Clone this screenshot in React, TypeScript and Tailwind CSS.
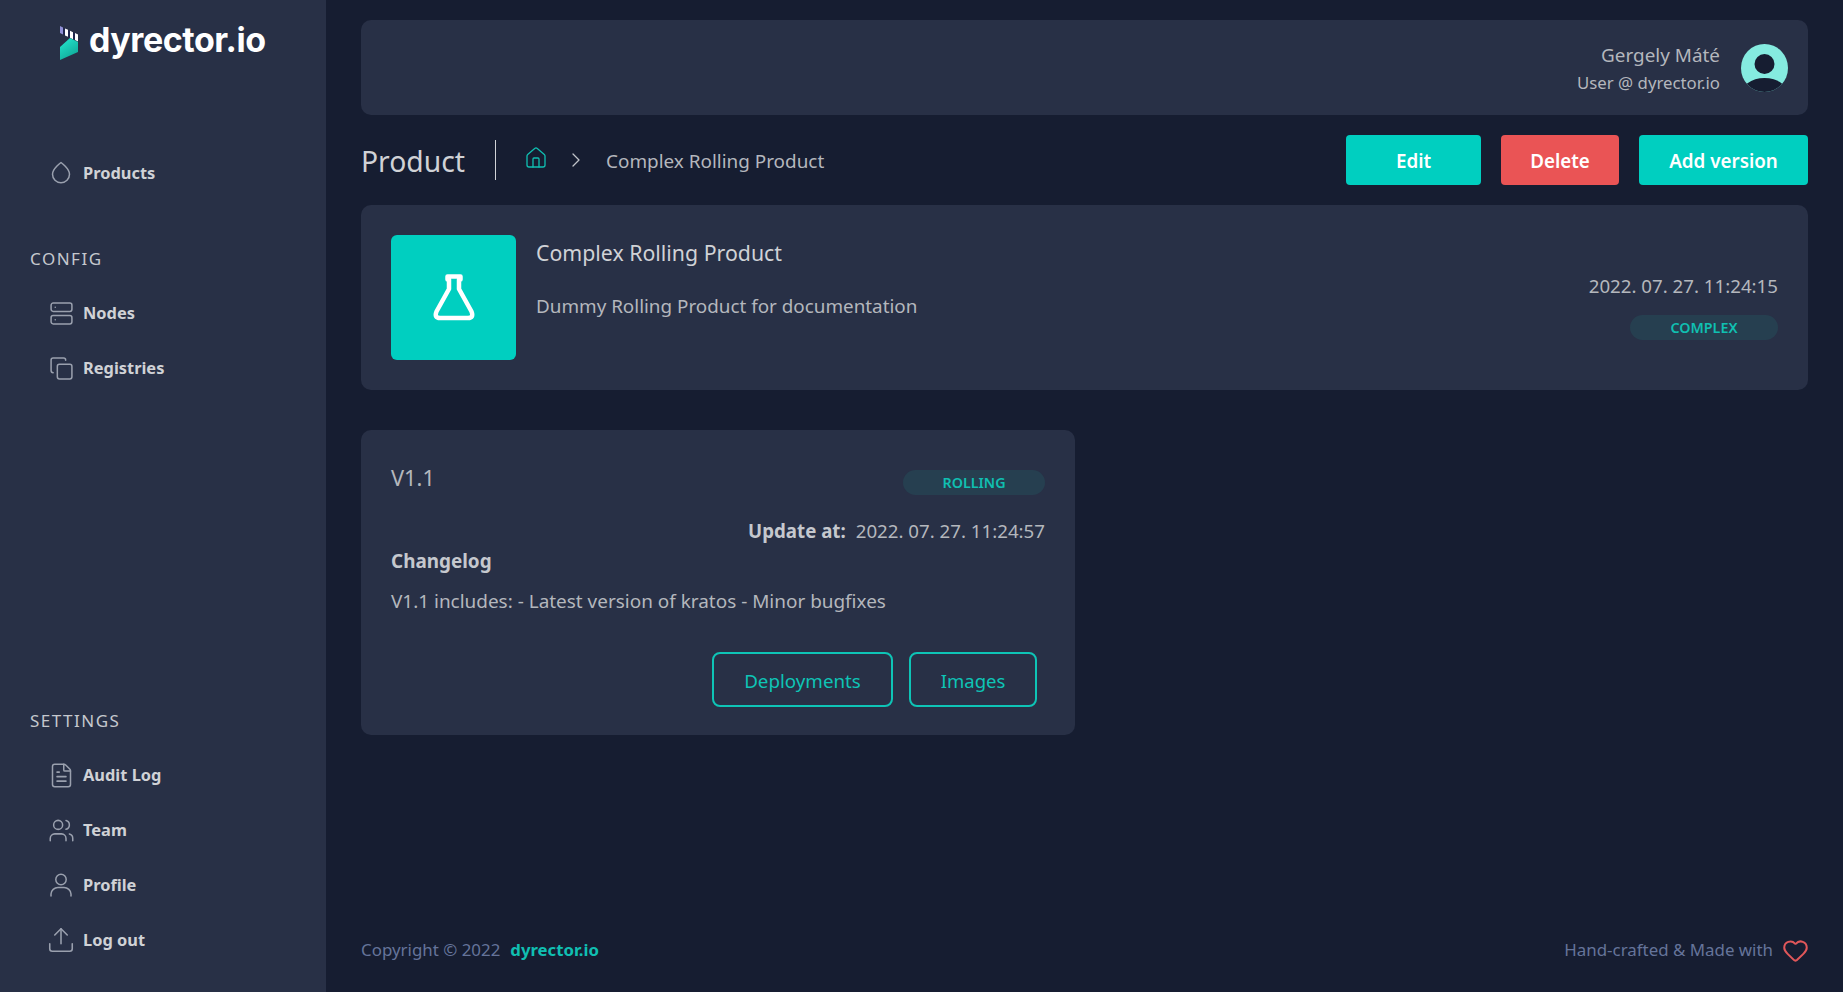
import { Server, Copy, FileText, Users, Upload, Home, ChevronRight, Heart } from "lucide-react";
import type { ReactNode } from "react";

function NavItem({ icon, label }: { icon: ReactNode; label: string }) {
  return (
    <div className="flex h-[55px] items-center gap-[10px] pl-[49px] text-[#9aa0ae]">
      <span className="flex h-[24px] w-[24px] items-center justify-center">{icon}</span>
      <span className="mt-[1px] text-[16.4px] font-bold text-[#d0d2d6]">{label}</span>
    </div>
  );
}

function GroupLabel({ children }: { children: ReactNode }) {
  return <div className="mb-[15px] h-[25px] pl-[30px] text-[17px] leading-[25px] tracking-[1.5px] text-[#c5c8ce]">{children}</div>;
}

function Logo() {
  return (
    <svg width="19" height="35" viewBox="0 0 19 35" className="shrink-0">
      <defs>
        <linearGradient id="lg" x1="0.2" y1="0.1" x2="0.7" y2="1">
          <stop offset="0" stopColor="#22e0c8" />
          <stop offset="1" stopColor="#0fa696" />
        </linearGradient>
      </defs>
      <polygon points="0,0 3,1.4 3,8.4 0,7" fill="#8f8fd6" />
      <polygon points="3,1.4 5,2.4 5,9.4 3,8.4" fill="#20264d" />
      <polygon points="5,2.4 8,3.8 8,10.8 5,9.4" fill="#ffffff" />
      <polygon points="8,3.8 10,4.8 10,11.8 8,10.8" fill="#20264d" />
      <polygon points="10,4.8 13,6.2 13,13.2 10,11.8" fill="#ffffff" />
      <polygon points="13,6.2 15,7.1 15,14.1 13,13.2" fill="#20264d" />
      <polygon points="15,7.1 18,8.5 18,15.5 15,14.1" fill="#ffffff" />
      <polygon points="0,21 10,12 18,16 18,26 0,34" fill="url(#lg)" />
    </svg>
  );
}

function Avatar() {
  return (
    <svg width="47" height="48" viewBox="0 0 47 48" className="shrink-0">
      <defs>
        <clipPath id="ac"><ellipse cx="23.5" cy="24" rx="23.5" ry="24" /></clipPath>
      </defs>
      <ellipse cx="23.5" cy="24" rx="23.5" ry="24" fill="#85ebe0" />
      <g clipPath="url(#ac)">
        <circle cx="23.5" cy="20" r="10" fill="#161d31" />
        <ellipse cx="23.5" cy="52" rx="24" ry="18" fill="#161d31" />
      </g>
    </svg>
  );
}

function ProductDrop() {
  return (
    <svg width="24" height="24" viewBox="0 0 24 24" fill="none" stroke="currentColor" strokeWidth="1.5" strokeLinejoin="round" className="mb-[2px] shrink-0">
      <path d="M12 2.5C12 2.5 20.5 8.5 20.5 14.2A8.5 8.5 0 0 1 3.5 14.2C3.5 8.5 12 2.5 12 2.5Z" />
    </svg>
  );
}

function ProfileIcon() {
  return (
    <svg width="22" height="24" viewBox="0 0 22 24" fill="none" stroke="currentColor" strokeWidth="1.5" strokeLinecap="round" className="shrink-0">
      <circle cx="11" cy="6.5" r="5.2" />
      <path d="M1 23V21A7 7 0 0 1 8 14.5H14A7 7 0 0 1 21 21V23" />
    </svg>
  );
}

function Flask() {
  return (
    <svg width="42" height="47" viewBox="0 0 42 47" fill="none" stroke="#ffffff" strokeWidth="4.5" strokeLinejoin="round" strokeLinecap="round" className="shrink-0">
      <path d="M14.5 2.5H27.5V5.5H26V15L38.5 37.5Q41 44 35 44H7Q1 44 3.5 37.5L16 15V5.5H14.5Z" />
    </svg>
  );
}

function Badge({ children, className }: { children: ReactNode; className: string }) {
  return (
    <div className={`flex h-[25px] items-center justify-center rounded-full bg-[#263f50] text-[14.3px] font-semibold text-[#10bfb1] ${className}`}>
      {children}
    </div>
  );
}

export default function App() {
  return (
    <div className="flex h-[992px] w-full overflow-hidden bg-[#161d31] font-['Noto_Sans',sans-serif] text-[#b4b7bd]">
      <aside className="flex h-full w-[326px] shrink-0 flex-col bg-[#283046] pb-[24.5px]">
        <div className="flex h-[145.5px] items-start gap-[10px] pl-[60px] pt-[26px]">
          <Logo />
          <span className="mt-[-9px] font-['Inter',sans-serif] text-[34px] font-bold leading-[46px] tracking-[-0.45px] text-white">dyrector.io</span>
        </div>
        <NavItem icon={<ProductDrop />} label="Products" />
        <div className="mt-[45px]">
          <GroupLabel>CONFIG</GroupLabel>
          <NavItem icon={<Server size={25} strokeWidth={1.45} className="shrink-0" />} label="Nodes" />
          <NavItem icon={<Copy size={25} strokeWidth={1.45} className="shrink-0" />} label="Registries" />
        </div>
        <div className="mt-auto">
          <GroupLabel>SETTINGS</GroupLabel>
          <NavItem icon={<FileText size={27} strokeWidth={1.35} className="shrink-0" />} label="Audit Log" />
          <NavItem icon={<Users size={27} strokeWidth={1.35} className="shrink-0" />} label="Team" />
          <NavItem icon={<ProfileIcon />} label="Profile" />
          <NavItem icon={<Upload size={30} strokeWidth={1.25} className="shrink-0" />} label="Log out" />
        </div>
      </aside>

      <main className="flex h-full min-w-0 flex-1 flex-col px-[35px] pb-[27px] pt-[20px]">
        <header className="flex h-[95px] items-center justify-end gap-[21px] rounded-[10px] bg-[#283046] pr-[20px]">
          <div className="mt-[2px] flex flex-col items-end">
            <span className="text-[18.9px] leading-[28px] text-[#b4b7bd]">Gergely Máté</span>
            <span className="text-[16.8px] leading-[28px] text-[#b4b7bd]">User @ dyrector.io</span>
          </div>
          <Avatar />
        </header>

        <div className="mt-[20px] flex h-[50px] items-center">
          <h1 className="pt-[2px] text-[28.3px] font-normal leading-[40px] text-[#d0d2d6]">Product</h1>
          <div className="ml-[30px] h-[40px] w-px bg-[#d0d2d6]" />
          <Home size={24} strokeWidth={1.3} className="mb-[4px] ml-[28px] shrink-0 text-[#10bfb1]" />
          <ChevronRight size={24} strokeWidth={1.3} className="ml-[16px] shrink-0 text-[#c0c3c9]" />
          <span className="ml-[18px] pt-[2px] text-[18.9px] text-[#b4b7bd]">Complex Rolling Product</span>
          <div className="ml-auto flex gap-[20px]">
            <button className="h-[50px] w-[135px] rounded-[4px] bg-[#00cfc0] pt-[2px] text-[18.8px] font-semibold text-white">Edit</button>
            <button className="h-[50px] w-[118px] rounded-[4px] bg-[#ea5455] pt-[2px] text-[18.8px] font-semibold text-white">Delete</button>
            <button className="h-[50px] w-[169px] rounded-[4px] bg-[#00cfc0] pt-[2px] text-[18.8px] font-semibold text-white">Add version</button>
          </div>
        </div>

        <section className="mt-[20px] flex h-[185px] rounded-[10px] bg-[#283046] p-[30px]">
          <div className="flex h-[125px] w-[125px] shrink-0 items-center justify-center rounded-[6px] bg-[#00cfc0]">
            <Flask />
          </div>
          <div className="ml-[20px]">
            <div className="text-[21.3px] leading-[36px] text-[#d0d2d6]">Complex Rolling Product</div>
            <div className="mt-[17px] text-[18.85px] leading-[36px] text-[#b4b7bd]">Dummy Rolling Product for documentation</div>
          </div>
          <div className="ml-auto flex flex-col items-end pt-[39px]">
            <div className="text-[18.7px] leading-[24px] text-[#b4b7bd]">2022. 07. 27. 11:24:15</div>
            <Badge className="mt-[17px] w-[148px]">COMPLEX</Badge>
          </div>
        </section>

        <section className="mt-[40px] h-[305px] w-[714px] rounded-[10px] bg-[#283046] p-[30px] pb-[28px]">
          <div className="flex items-start justify-between">
            <span className="mt-[3px] text-[21.8px] leading-[30px] text-[#b4b7bd]">V1.1</span>
            <Badge className="mt-[10px] w-[142px]">ROLLING</Badge>
          </div>
          <div className="mt-[23px] flex h-[26px] items-center justify-end text-[18.7px]">
            <span className="font-bold text-[#c5c8ce]">Update at:</span>
            <span className="ml-[10px] text-[#b4b7bd]">2022. 07. 27. 11:24:57</span>
          </div>
          <div className="mt-[4px] h-[26px] text-[18.9px] font-bold leading-[26px] text-[#c5c8ce]">Changelog</div>
          <div className="mt-[14px] h-[26px] text-[18.95px] leading-[26px] text-[#b4b7bd]">V1.1 includes: - Latest version of kratos - Minor bugfixes</div>
          <div className="mt-[38px] flex justify-end gap-[16px] pr-[8px]">
            <button className="h-[55px] w-[181px] rounded-[8px] border-2 border-[#0ec4b6] pt-[3px] text-[18.75px] text-[#0ec4b6]">Deployments</button>
            <button className="h-[55px] w-[128px] rounded-[8px] border-2 border-[#0ec4b6] pt-[3px] text-[18.5px] text-[#0ec4b6]">Images</button>
          </div>
        </section>

        <footer className="mt-auto flex h-[30px] items-center justify-between text-[16.9px] text-[#65749a]">
          <div>
            Copyright © 2022<span className="ml-[10px] text-[16.75px] font-bold text-[#10bfb1]">dyrector.io</span>
          </div>
          <div className="-mr-[1px] flex items-center gap-[9px]">
            Hand-crafted &amp; Made with
            <Heart size={27} strokeWidth={1.8} className="shrink-0 text-[#e0575a]" />
          </div>
        </footer>
      </main>
    </div>
  );
}
